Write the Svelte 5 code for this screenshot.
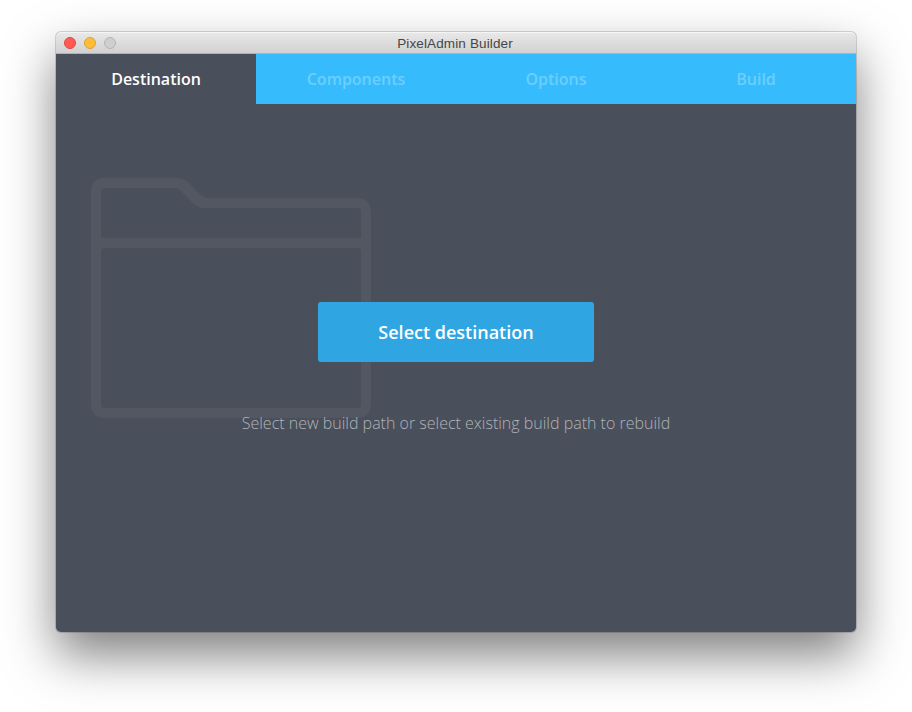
<script>
  const tabs = ['Destination', 'Components', 'Options', 'Build'];
  let active = $state(0);
</script>

<main class="desktop">
  <section class="window">
    <header class="titlebar">
      <div class="lights">
        <span class="light close"></span>
        <span class="light minimize"></span>
        <span class="light zoom"></span>
      </div>
      <span class="title">PixelAdmin Builder</span>
    </header>
    <nav class="tabs">
      {#each tabs as tab, i}
        <button class="tab" class:active={active === i} onclick={() => (active = i)}>{tab}</button>
      {/each}
    </nav>
    <div class="content">
      <svg class="folder" width="280" height="240" viewBox="0 0 280 240" fill="none">
        <path
          fill="#535762"
          fill-rule="evenodd"
          d="M14 0H87Q93 0 98 5L110 17Q113 20 117 20H266Q280 20 280 34V226Q280 240 266 240H14Q0 240 0 226V14Q0 0 14 0ZM14 10Q10 10 10 14V60H270V34Q270 30 266 30H114Q107 30 102 25L89 12Q87 10 84 10ZM14 70Q10 70 10 74V226Q10 230 14 230H266Q270 230 270 226V74Q270 70 266 70Z"
        />
      </svg>
      <div class="panel">
        <button class="select">Select destination</button>
        <p class="hint">Select new build path or select existing build path to rebuild</p>
      </div>
    </div>
  </section>
</main>

<style>
  :global(body) {
    background: #fff;
  }
  .desktop {
    box-sizing: border-box;
    width: 912px;
    height: 712px;
    padding: 32px 56px 80px;
    overflow: hidden;
    font-family: 'Open Sans', sans-serif;
  }
  .window {
    display: flex;
    flex-direction: column;
    height: 600px;
    border-radius: 5px;
    background: #494f5b;
    box-shadow:
      0 0 0 1px rgba(0, 0, 0, 0.15),
      0 23px 50px rgba(0, 0, 0, 0.5);
  }
  .titlebar {
    box-sizing: border-box;
    display: grid;
    grid-template-columns: 1fr auto 1fr;
    align-items: center;
    height: 22px;
    padding: 0 8px;
    border-radius: 5px 5px 0 0;
    border-bottom: 1px solid #b1b1b1;
    background: linear-gradient(#e9e9e9, #d1d1d1);
    box-shadow: inset 0 1px #f5f5f5;
  }
  .lights {
    display: flex;
    gap: 8px;
  }
  .light {
    box-sizing: border-box;
    width: 12px;
    height: 12px;
    border: 1px solid;
    border-radius: 50%;
  }
  .close {
    background: #ff5b54;
    border-color: #e2463f;
  }
  .minimize {
    background: #ffbd3a;
    border-color: #dfa034;
  }
  .zoom {
    background: #cfcfcf;
    border-color: #b5b5b5;
  }
  .title {
    color: #464646;
    font: 13.5px/19px 'Liberation Sans', sans-serif;
    letter-spacing: 0.13px;
    padding: 2px 2px 0 0;
  }
  .tabs {
    display: flex;
    height: 50px;
    background: #36bcfd;
  }
  .tab {
    flex: 1;
    padding: 0;
    border: 0;
    background: none;
    color: #6dcefd;
    font: 600 16px/50px 'Open Sans', sans-serif;
  }
  .tab.active {
    background: #494f5b;
    color: #fff;
  }
  .content {
    display: grid;
    flex: 1;
    min-height: 0;
  }
  .folder {
    grid-area: 1 / 1;
    margin: 74px 0 0 35px;
  }
  .panel {
    grid-area: 1 / 1;
    display: flex;
    flex-direction: column;
    align-items: center;
    padding-top: 198px;
    z-index: 1;
  }
  .select {
    width: 276px;
    height: 60px;
    padding: 0;
    border: 0;
    border-radius: 3px;
    background: #2fa5e2;
    color: #fff;
    font: 600 18px/60px 'Open Sans', sans-serif;
  }
  .hint {
    margin: 49px 0 0;
    color: #b0b3b8;
    font-size: 16px;
    font-weight: 300;
    line-height: 24px;
    white-space: nowrap;
  }
</style>
